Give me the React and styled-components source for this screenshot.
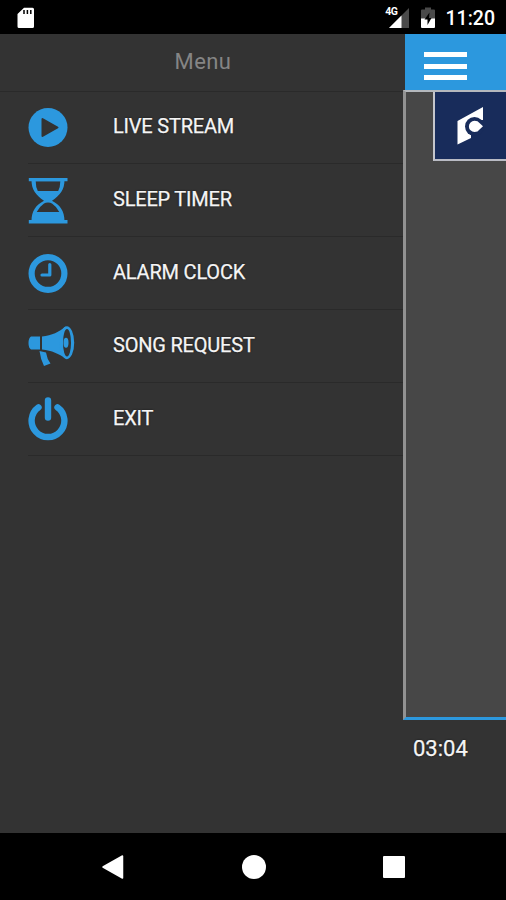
import styled, { createGlobalStyle } from "styled-components";

const menuItems = [
  { label: "LIVE STREAM", icon: PlayIcon },
  { label: "SLEEP TIMER", icon: HourglassIcon },
  { label: "ALARM CLOCK", icon: ClockIcon },
  { label: "SONG REQUEST", icon: MegaphoneIcon },
  { label: "EXIT", icon: PowerIcon },
];

export default function App() {
  return (
    <Screen>
      <GlobalStyle />
      <StatusBar>
        <SdCardIcon />
        <StatusRight>
          <Network>
            <NetworkType>4G</NetworkType>
            <SignalIcon />
          </Network>
          <BatteryIcon />
          <Clock>11:20</Clock>
        </StatusRight>
      </StatusBar>
      <Content>
        <Drawer>
          <DrawerHeader>Menu</DrawerHeader>
          <MenuList>
            {menuItems.map(({ label, icon: Icon }) => (
              <MenuItem key={label}>
                <Icon />
                <Label>{label}</Label>
              </MenuItem>
            ))}
          </MenuList>
        </Drawer>
        <Player>
          <PlayerHeader>
            <MenuButton aria-label="Toggle menu">
              <Bar />
              <Bar />
              <Bar />
            </MenuButton>
          </PlayerHeader>
          <Artwork>
            <StationLogo>
              <LogoIcon />
            </StationLogo>
          </Artwork>
          <Elapsed>03:04</Elapsed>
        </Player>
      </Content>
      <NavBar>
        <svg width="24" height="26" viewBox="0 0 24 26">
          <path
            d="M2 13 L21.500 2 V24 Z"
            fill="#fff"
            stroke="#fff"
            strokeWidth="1.5"
            strokeLinejoin="round"
          />
        </svg>
        <HomeButton aria-label="Home" />
        <RecentButton aria-label="Recent apps" />
      </NavBar>
    </Screen>
  );
}

function SdCardIcon() {
  return (
    <svg width="18" height="22" viewBox="0 0 18 22">
      <path
        d="M7 .8H15.5a1.5 1.5 0 0 1 1.5 1.5V19.5a1.5 1.5 0 0 1-1.5 1.5H2a1.5 1.5 0 0 1-1.5-1.500V7Z"
        fill="#fff"
      />
      <path d="M7 3v4M10.400 3v4M13.800 3v4" stroke="#000" strokeWidth="1.5" />
    </svg>
  );
}

function SignalIcon() {
  return (
    <svg width="20" height="20" viewBox="0 0 20 20">
      <path d="M20 0V20H0Z" fill="#4a4a4a" />
      <path d="M12.500 7.500V20H0Z" fill="#fff" />
    </svg>
  );
}

function BatteryIcon() {
  return (
    <svg width="14" height="22" viewBox="0 0 14 22">
      <path d="M1 2.500H4V.5h6v2h3a1 1 0 0 1 1 1V12H0V3.500a1 1 0 0 1 1-1Z" fill="#4a4a4a" />
      <path d="M0 11.500h14V20a1 1 0 0 1-1 1H1a1 1 0 0 1-1-1Z" fill="#fff" />
      <path d="M8.500 5.500 3.500 12.500H6.500V18L10.500 11H8Z" fill="#000" />
    </svg>
  );
}

function PlayIcon() {
  return (
    <ItemIcon viewBox="0 0 48 72">
      <circle cx="20" cy="36.5" r="19.5" />
      <path
        d="M14.500 28v17L29.500 36.500Z"
        fill="#333"
        stroke="#333"
        strokeWidth="2"
        strokeLinejoin="round"
      />
    </ItemIcon>
  );
}

function HourglassIcon() {
  return (
    <ItemIcon viewBox="0 0 48 72">
      <path d="M.8 14H39.500V17.300H.8ZM.8 56H39.500V59.500H.8Z" />
      <path
        fillRule="evenodd"
        d="M3.500 16H36.500C36.500 26 32 31 24 36.800C32 41 36.500 47 36.500 57H3.500C3.500 47 8 41 16 36.800C8 31 3.500 26 3.500 16ZM7.700 17.300Q7.700 23 9.800 27H30.200Q32.300 23 32.300 17.300ZM8.700 48H31.300Q28.500 42.500 24 39.500Q22.500 38.500 20 38.500T16 39.500Q11.500 42.500 8.700 48Z"
      />
    </ItemIcon>
  );
}

function ClockIcon() {
  return (
    <ItemIcon viewBox="0 0 48 72">
      <circle cx="20" cy="36.5" r="16.4" fill="none" stroke="#2c98de" strokeWidth="6.2" />
      <path
        d="M21.800 27.500V38H14"
        fill="none"
        stroke="#2c98de"
        strokeWidth="3.2"
        strokeLinecap="round"
        strokeLinejoin="round"
      />
    </ItemIcon>
  );
}

function MegaphoneIcon() {
  return (
    <ItemIcon viewBox="0 0 48 72">
      <path d="M3 26.500H12V39.500H3Q.5 38 .5 33T3 26.500Z" />
      <path d="M14 26.500C24 25.500 31 22 37.500 16.500V48.500C31 44 24 40.500 14 39.500Z" />
      <ellipse cx="38.8" cy="32.7" rx="7.4" ry="16.5" />
      <ellipse cx="39" cy="32.7" rx="4" ry="13.7" fill="#333" />
      <ellipse cx="38" cy="32.7" rx="2.5" ry="5" />
      <path d="M11.500 41L18 42.500Q19 49 22.500 53.500L16 56Q12.500 49 11.500 41Z" />
    </ItemIcon>
  );
}

function PowerIcon() {
  return (
    <ItemIcon viewBox="0 0 48 72">
      <path
        d="M10.500 24.300A16.400 16.400 0 1 0 29.500 24.300M20 17.500V34.500"
        fill="none"
        stroke="#2c98de"
        strokeWidth="6.400"
        strokeLinecap="round"
      />
    </ItemIcon>
  );
}

function LogoIcon() {
  return (
    <svg width="30" height="40" viewBox="0 0 30 40">
      <path d="M1.500 15 27 1V14H15V32L1.500 38.500Z" fill="#fff" />
      <circle cx="18.5" cy="20.5" r="9.5" fill="#182c5b" />
      <path d="M18.500 14.800Q22 14.800 23.500 17L27 20.200L23.500 23.500Q22 26 18.500 26A5.600 5.600 0 0 1 18.500 14.800Z" fill="#fff" />
    </svg>
  );
}

const GlobalStyle = createGlobalStyle`
  * {
    box-sizing: border-box;
  }

  body {
    margin: 0;
    background: #000;
    font-family: Roboto, sans-serif;
  }

  button {
    padding: 0;
    border: none;
    background: none;
  }

  svg {
    display: block;
    flex-shrink: 0;
  }
`;

const Screen = styled.div`
  display: flex;
  flex-direction: column;
  width: 506px;
  height: 900px;
  overflow: hidden;
  background: #000;
`;

const StatusBar = styled.header`
  display: flex;
  align-items: center;
  justify-content: space-between;
  height: 34px;
  padding: 1px 11px 0 17px;
  color: #fff;
`;

const StatusRight = styled.div`
  display: flex;
  align-items: center;
`;

const Network = styled.div`
  display: flex;
  align-items: flex-start;
  margin-right: 12px;
`;

const NetworkType = styled.span`
  margin: -2px -9px 0 0;
  font-size: 10.5px;
  font-weight: 700;
  line-height: 12px;
  letter-spacing: -0.5px;
  z-index: 1;
`;

const Clock = styled.span`
  margin: 2px 0 0 11px;
  font-size: 19.5px;
  font-weight: 500;
  line-height: 24px;
`;

const Content = styled.main`
  display: flex;
  height: 799px;
  background: #333;
`;

const Drawer = styled.nav`
  width: 403px;
  flex-shrink: 0;
`;

const DrawerHeader = styled.h1`
  display: flex;
  align-items: center;
  justify-content: center;
  height: 58px;
  margin: 0;
  padding: 0 0 3px 3px;
  border-bottom: 1px solid #2a2a2a;
  color: #858585;
  font-size: 22px;
  font-weight: 400;
  letter-spacing: 0.4px;
`;

const MenuList = styled.ul`
  margin: -1px 0 0;
  padding: 0 0 0 28px;
  list-style: none;
`;

const MenuItem = styled.li`
  display: flex;
  align-items: center;
  height: 73px;
  border-bottom: 1px solid #2a2a2a;
`;

const ItemIcon = styled.svg`
  width: 48px;
  height: 72px;
  fill: #2c98de;
`;

const Label = styled.span`
  margin: -3px 0 0 37px;
  color: #f5f5f5;
  font-size: 20px;
  line-height: 24px;
  letter-spacing: -0.2px;
  text-shadow: 0 0 2px #111;
  -webkit-text-stroke: 0.25px #f5f5f5;
`;

const Player = styled.section`
  flex: 1;
`;

const PlayerHeader = styled.div`
  height: 56px;
  margin-left: 2px;
  padding: 18px 0 0 18.5px;
  background: #2c98de;
`;

const MenuButton = styled.button`
  display: flex;
  flex-direction: column;
  gap: 6.5px;
  width: 43px;
`;

const Bar = styled.span`
  width: 100%;
  height: 5px;
  background: #fff;
`;

const Artwork = styled.div`
  display: flex;
  justify-content: flex-end;
  align-items: flex-start;
  height: 630px;
  border-top: 2px solid #b4b8bd;
  border-left: 3px solid #929292;
  border-bottom: 3px solid #2c98de;
  background: #474747;
`;

const StationLogo = styled.div`
  width: 73px;
  height: 69px;
  padding: 14px 0 0 21px;
  border-left: 2px solid #c4c6cc;
  border-bottom: 2px solid #b9bbc4;
  background: #182c5b;
`;

const Elapsed = styled.time`
  display: block;
  padding: 16px 0 0 10px;
  color: #f5f5f5;
  font-size: 22px;
  line-height: 26px;
  text-shadow: 0 0 2px #111;
  -webkit-text-stroke: 0.25px #f5f5f5;
`;

const NavBar = styled.footer`
  display: flex;
  align-items: center;
  justify-content: space-between;
  height: 67px;
  padding: 0 101px;
`;

const HomeButton = styled.button`
  width: 24px;
  height: 24px;
  border-radius: 50%;
  background: #fff;
`;

const RecentButton = styled.button`
  width: 22px;
  height: 22px;
  border-radius: 1px;
  background: #fff;
`;
